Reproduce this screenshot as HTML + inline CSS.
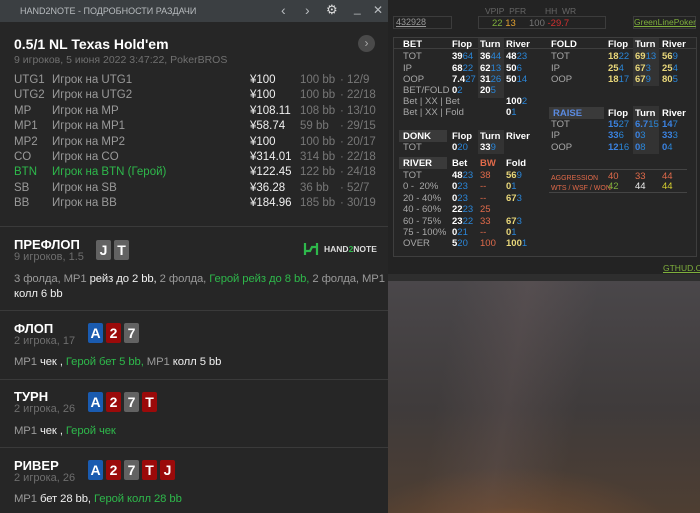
<!DOCTYPE html>
<html><head><meta charset="utf-8"><style>
*{margin:0;padding:0;box-sizing:border-box}
body{width:700px;height:513px;overflow:hidden;position:relative;background:#1e1e1e;font-family:"Liberation Sans","Noto Sans CJK SC",sans-serif}
.a{position:absolute;white-space:nowrap}
#left{position:absolute;left:0;top:0;width:388px;height:513px;background:#262626}
#tb{position:absolute;left:0;top:0;width:388px;height:22px;background:#3b3f42;color:#b8bcbf;font-size:9px}
.w{color:#f0f0f0}.g{color:#2eb84b}
.hr{position:absolute;left:0;width:388px;height:1px;background:#3a3a3a}
.card{position:absolute;width:15px;height:20px;border-radius:2px;color:#fff;font-weight:bold;font-size:14px;text-align:center;line-height:20px}
.cb{background:#1a5bb0}.cr{background:#9b0a0a}.cg{background:#626262}
.st{position:absolute;left:14px;font-size:13px;font-weight:bold;color:#fff}
.ss{position:absolute;left:14px;font-size:11px;color:#6e6e6e}
.act{position:absolute;left:14px;font-size:11.3px;color:#9a9a9a;line-height:15px;letter-spacing:-0.1px}
#hud{position:absolute;left:388px;top:0;width:312px;height:281px;background:#232323}
.h{position:absolute;font-size:9.5px;color:#a8a8a8;white-space:nowrap}
.hb{font-weight:bold;color:#fff}
.bl{color:#2a86d8;font-weight:normal}
.y{color:#e8d77a;font-weight:bold}
.o{color:#e06a4a}
#sky{position:absolute;left:388px;top:281px;width:312px;height:232px;background:radial-gradient(ellipse 55% 35% at 40% 115%,#a85e28 0%,rgba(120,80,50,.5) 50%,rgba(0,0,0,0) 100%),linear-gradient(100deg,rgba(0,0,0,0) 20%,rgba(120,100,100,.25) 40%,rgba(0,0,0,0) 60%),linear-gradient(#4a474a,#3f3b3b 55%,#4e3e32)}
</style></head><body>
<div id="left">
<div id="tb"><span class="a" style="left:20px;top:6px">HAND2NOTE - ПОДРОБНОСТИ РАЗДАЧИ</span>
<span class="a" style="left:281px;top:2px;font-size:14px">‹</span><span class="a" style="left:305px;top:2px;font-size:14px">›</span>
<span class="a" style="left:326px;top:2px;font-size:13px;color:#ddd">⚙</span>
<span class="a" style="left:354px;top:1px;font-size:12px">_</span><span class="a" style="left:373px;top:3px;font-size:12px">✕</span></div>
<div class="a" style="left:14px;top:36px;font-size:14px;font-weight:bold;color:#fff">0.5/1 NL Texas Hold'em</div>
<div class="a" style="left:14px;top:54px;font-size:10.5px;color:#707070">9 игроков, 5 июня 2022 3:47:22, PokerBROS</div>
<div class="a" style="left:358px;top:35px;width:17px;height:17px;border-radius:50%;background:#4a4a4a;color:#aaa;font-size:12px;text-align:center;line-height:16px">›</div>
<div id="rows"></div>
<div class="hr" style="top:226px"></div>
<div class="st" style="top:237px">ПРЕФЛОП</div><div class="ss" style="top:251px">9 игроков, 1.5</div>
<div class="card cg" style="left:96px;top:240px">J</div><div class="card cg" style="left:114px;top:240px">T</div>
<svg class="a" style="left:303px;top:241px" width="16" height="16"><path d="M2 2v12M14 2v12M2 10h5l2-4h5" stroke="#2eb84b" stroke-width="2.2" fill="none"/></svg>
<div class="a" style="left:324px;top:244px;font-size:8.5px;font-weight:bold;color:#ddd">HAND<span class="g">2</span>NOTE</div>
<div class="act" style="top:272px">3 фолда, MP1 <span class="w">рейз до 2 bb,</span> 2 фолда, <span class="g">Герой рейз до 8 bb,</span> 2 фолда, MP1<br><span class="w">колл 6 bb</span></div>
<div class="hr" style="top:310px"></div>
<div class="st" style="top:321px">ФЛОП</div><div class="ss" style="top:335px">2 игрока, 17</div>
<div class="card cb" style="left:88px;top:323px">A</div><div class="card cr" style="left:106px;top:323px">2</div><div class="card cg" style="left:124px;top:323px">7</div>
<div class="act" style="top:355px">MP1 <span class="w">чек ,</span> <span class="g">Герой бет 5 bb,</span> MP1 <span class="w">колл 5 bb</span></div>
<div class="hr" style="top:379px"></div>
<div class="st" style="top:389px">ТУРН</div><div class="ss" style="top:403px">2 игрока, 26</div>
<div class="card cb" style="left:88px;top:392px">A</div><div class="card cr" style="left:106px;top:392px">2</div><div class="card cg" style="left:124px;top:392px">7</div><div class="card cr" style="left:142px;top:392px">T</div>
<div class="act" style="top:424px">MP1 <span class="w">чек ,</span> <span class="g">Герой чек</span></div>
<div class="hr" style="top:447px"></div>
<div class="st" style="top:458px">РИВЕР</div><div class="ss" style="top:472px">2 игрока, 26</div>
<div class="card cb" style="left:88px;top:460px">A</div><div class="card cr" style="left:106px;top:460px">2</div><div class="card cg" style="left:124px;top:460px">7</div><div class="card cr" style="left:142px;top:460px">T</div><div class="card cr" style="left:160px;top:460px">J</div>
<div class="act" style="top:492px">MP1 <span class="w">бет 28 bb,</span> <span class="g">Герой колл 28 bb</span></div>
</div>
<div id="hud">
<div class="a" style="left:5px;top:16px;width:59px;height:13px;border:1px solid #3c3c3c;font-size:9px;color:#999;padding-left:2px;text-decoration:underline">432928</div>
<div class="a" style="left:90px;top:16px;width:128px;height:13px;border:1px solid #3c3c3c"></div>
<div class="h" style="left:97px;top:6px;color:#666;font-size:8.5px">VPIP&nbsp; PFR&nbsp;&nbsp;&nbsp;&nbsp;&nbsp;&nbsp;&nbsp; HH&nbsp; WR</div>
<div class="h" style="left:104px;top:18px"><span style="color:#7fb03c">22</span> <span style="color:#e0a030">13</span>&nbsp;&nbsp;&nbsp;&nbsp; <span style="color:#777">100</span> <span style="color:#d03030">-29.7</span></div>
<div class="a" style="left:245px;top:16px;width:63px;height:13px;border:1px solid #3c3c3c;font-size:8.5px;color:#7fb03c;text-decoration:underline;text-align:right;padding-right:2px">GreenLinePoker</div>
<div class="a" style="left:5px;top:37px;width:304px;height:220px;border:1px solid #3e3e3e;background:#262626"></div>
<div class="a" style="left:5px;top:48px;width:304px;height:1px;background:#3e3e3e"></div>
<div id="g"></div>
<div class="a" style="left:275px;top:263px;font-size:8.5px;color:#7fb03c;text-decoration:underline">GTHUD.COM</div>
<div class="a" style="left:0;top:274px;width:312px;height:7px;background:#2e2e2e"></div>
</div>
<div id="sky"></div>
<script>
var R=[["UTG1","Игрок на UTG1","¥100","100 bb","12/9"],["UTG2","Игрок на UTG2","¥100","100 bb","22/18"],["MP","Игрок на MP","¥108.11","108 bb","13/10"],["MP1","Игрок на MP1","¥58.74","59 bb","29/15"],["MP2","Игрок на MP2","¥100","100 bb","20/17"],["CO","Игрок на CO","¥314.01","314 bb","22/18"],["BTN","Игрок на BTN (Герой)","¥122.45","122 bb","24/18"],["SB","Игрок на SB","¥36.28","36 bb","52/7"],["BB","Игрок на BB","¥184.96","185 bb","30/19"]];
var s="";R.forEach(function(r,i){var y=74+i*15.4,h=r[0]=="BTN",f='font-size:11.5px;top:'+y+'px;';
s+='<div class="a" style="left:14px;'+f+'color:'+(h?'#2eb84b':'#9a9a9a')+'">'+r[0]+'</div><div class="a" style="left:52px;'+f+'color:'+(h?'#2eb84b':'#9a9a9a')+'">'+r[1]+'</div><div class="a" style="left:250px;'+f+'color:#f0f0f0">'+r[2]+'</div><div class="a" style="left:300px;'+f+'color:#777">'+r[3]+'</div><div class="a" style="left:340px;'+f+'color:#777">·</div><div class="a" style="left:347px;'+f+'color:#777">'+r[4]+'</div>';});
document.getElementById("rows").innerHTML=s;
var g="";function t(x,y,h,c){g+='<div class="h '+(c||"")+'" style="left:'+x+'px;top:'+y+'px">'+h+'</div>';}
function bg(x,y,w,hh,c){g+='<div class="a" style="left:'+x+'px;top:'+y+'px;width:'+w+'px;height:'+hh+'px;background:'+(c||'#333')+'"></div>';}
function n(a,b,c){return '<span class="'+(c||'hb')+'">'+a+'</span><span class="bl">'+b+'</span>';}
bg(90,38,26,60);bg(245,38,26,48);bg(11,130,48,12,'#3a3a3a');bg(90,130,26,24);bg(11,157,48,12,'#3a3a3a');bg(161,107,55,12,'#3a3a3a');bg(245,106,26,48);
t(15,39,"BET","hb");t(64,39,"Flop","hb");t(92,39,"Turn","hb");t(118,39,"River","hb");
t(163,39,"FOLD","hb");t(220,39,"Flop","hb");t(247,39,"Turn","hb");t(274,39,"River","hb");
var L=[["TOT",["39","64"],["36","44"],["48","23"],["18","22"],["69","13"],["56","9"]],["IP",["68","22"],["62","13"],["50","6"],["25","4"],["67","3"],["25","4"]],["OOP",["7.4","27"],["31","26"],["50","14"],["18","17"],["67","9"],["80","5"]]];
L.forEach(function(r,i){var y=51+i*11.5;t(15,y,r[0]);t(64,y,n(r[1][0],r[1][1]));t(92,y,n(r[2][0],r[2][1]));t(118,y,n(r[3][0],r[3][1]));t(163,y,r[0]);t(220,y,n(r[4][0],r[4][1],"y"));t(247,y,n(r[5][0],r[5][1],"y"));t(274,y,n(r[6][0],r[6][1],"y"));});
t(15,85,"BET/FOLD");t(64,85,n("0","2"));t(92,85,n("20","5"));
t(15,96,"Bet | XX | Bet");t(118,96,n("100","2"));t(15,107,"Bet | XX | Fold");t(118,107,n("0","1"));
t(165,108,'<span style="color:#5a8ae0;font-weight:bold">RAISE</span>');t(220,108,"Flop","hb");t(247,108,"Turn","hb");t(274,108,"River","hb");
var B=function(a,b){return '<span style="color:#3b82e0;font-weight:bold">'+a+'</span><span class="bl">'+b+'</span>';};
t(163,119,"TOT");t(220,119,B("15","27"));t(247,119,B("6.7","15"));t(274,119,B("14","7"));
t(163,130,"IP");t(220,130,B("33","6"));t(247,130,B("0","3"));t(274,130,B("33","3"));
t(163,142,"OOP");t(220,142,B("12","16"));t(247,142,B("0","8"));t(274,142,B("0","4"));
t(15,131,"DONK","hb");t(64,131,"Flop","hb");t(92,131,"Turn","hb");t(118,131,"River","hb");
t(15,142,"TOT");t(64,142,n("0","20"));t(92,142,n("33","9"));
t(15,158,"RIVER","hb");t(64,158,"Bet","hb");t(92,158,'<span class="o" style="font-weight:bold">BW</span>');t(118,158,"Fold","hb");
var V=[["TOT","48","23","38","56","9"],["0 -&nbsp; 20%","0","23","--","0","1"],["20 - 40%","0","23","--","67","3"],["40 - 60%","22","23","25","",""],["60 - 75%","23","22","33","67","3"],["75 - 100%","0","21","--","0","1"],["OVER","5","20","100","100","1"]];
V.forEach(function(r,i){var y=170+i*11.4;t(15,y,r[0]);t(64,y,n(r[1],r[2]));t(92,y,'<span class="o">'+r[3]+'</span>');if(r[4])t(118,y,n(r[4],r[5],"y"));});
bg(161,169,138,1,'#444');bg(161,192,138,1,'#444');
t(163,172,'<span class="o" style="font-size:7px">AGGRESSION</span>');t(220,171,'<span class="o">40</span>');t(247,171,'<span class="o">33</span>');t(274,171,'<span class="o">44</span>');
t(163,182,'<span class="o" style="font-size:7px">WTS / WSF / WON</span>');t(220,181,'<span style="color:#7fb03c">42</span>');t(247,181,'<span style="color:#eee">44</span>');t(274,181,'<span style="color:#d8d030">44</span>');
document.getElementById("g").innerHTML=g;
</script>
</body></html>
